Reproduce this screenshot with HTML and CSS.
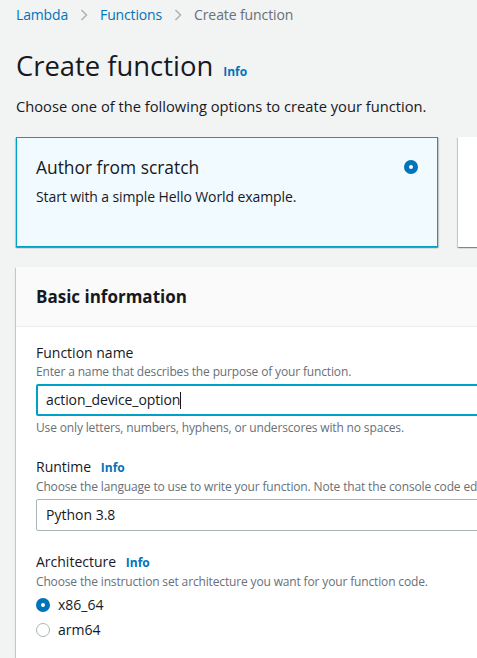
FILE: index.html
```html
<!DOCTYPE html>
<html lang="en">
<head>
<meta charset="utf-8">
<title>Create function</title>
<link rel="stylesheet" href="styles.css">
</head>
<body>
<main class="page">
  <nav class="crumbs">
    <a class="crumb-link">Lambda</a>
    <svg class="chev" width="8" height="12" viewBox="0 0 8 12"><path d="M1.5 1 L6.5 6 L1.5 11" fill="none" stroke="#aab7b8" stroke-width="1.6"/></svg>
    <a class="crumb-link">Functions</a>
    <svg class="chev" width="8" height="12" viewBox="0 0 8 12"><path d="M1.5 1 L6.5 6 L1.5 11" fill="none" stroke="#aab7b8" stroke-width="1.6"/></svg>
    <span class="crumb-current">Create function</span>
  </nav>

  <header class="head">
    <h1 class="title">Create function</h1>
    <span class="info">Info</span>
  </header>
  <p class="lead">Choose one of the following options to create your function.</p>

  <div class="tiles">
    <div class="tile selected">
      <div class="tile-top">
        <div class="tile-title">Author from scratch</div>
        <span class="radio on"></span>
      </div>
      <div class="tile-desc">Start with a simple Hello World example.</div>
    </div>
    <div class="tile"></div>
  </div>

  <section class="panel">
    <div class="panel-head">Basic information</div>
    <div class="panel-body">
      <div class="field">
        <div class="label">Function name</div>
        <div class="desc">Enter a name that describes the purpose of your function.</div>
        <div class="input focused">action_device_option<span class="caret"></span></div>
        <div class="desc constraint">Use only letters, numbers, hyphens, or underscores with no spaces.</div>
      </div>
      <div class="field">
        <div class="label">Runtime <span class="info small">Info</span></div>
        <div class="desc">Choose the language to use to write your function. Note that the console code editor supports only Node.js, Python, and Ruby.</div>
        <div class="input">Python 3.8</div>
      </div>
      <div class="field">
        <div class="label">Architecture <span class="info small">Info</span></div>
        <div class="desc">Choose the instruction set architecture you want for your function code.</div>
        <div class="options">
          <div class="option"><span class="radio on"></span>x86_64</div>
          <div class="option"><span class="radio"></span>arm64</div>
        </div>
      </div>
    </div>
  </section>
</main>
</body>
</html>
```
FILE: styles.css
```css
html, body {
  margin: 0;
  padding: 0;
  overflow: hidden;
}
body {
  background: #f2f3f3;
  color: #16191f;
  font-family: "Open Sans", "Noto Sans", sans-serif;
  font-size: 14px;
  line-height: 20px;
}
.page {
  width: 864px;
  padding-left: 16px;
}
.crumbs {
  display: flex;
  align-items: center;
  height: 30px;
  gap: 12px;
}
.crumb-link {
  color: #0073bb;
  letter-spacing: -0.15px;
}
.crumb-current {
  color: #687078;
  letter-spacing: -0.1px;
}
.chev {
  display: block;
}
.head {
  display: flex;
  align-items: baseline;
  gap: 10px;
  margin-top: 18px;
}
.title {
  margin: 0;
  font-size: 27.4px;
  line-height: 36px;
  font-weight: 400;
}
.info {
  color: #0073bb;
  font-weight: 700;
  font-size: 12px;
}
.info.small {
  margin-left: 6px;
}
.lead {
  margin: 12px 0 0;
  font-size: 14.7px;
}
.tiles {
  display: grid;
  grid-template-columns: 422px 422px;
  gap: 20px;
  margin-top: 21px;
}
.tile {
  box-sizing: border-box;
  height: 110px;
  background: #fff;
  border: 1px solid #fff;
  box-shadow: 0 1px 1px 0 rgba(0,28,36,.3), 1px 1px 1px 0 rgba(0,28,36,.15), -1px 1px 1px 0 rgba(0,28,36,.15);
  padding: 17px 19px;
}
.tile.selected {
  background: #f1faff;
  border-color: #00a1c9;
}
.tile-top {
  display: flex;
  justify-content: space-between;
  align-items: center;
}
.tile-title {
  font-size: 17.4px;
  line-height: 24px;
}
.tile-desc {
  margin-top: 8px;
  letter-spacing: -0.1px;
}
.radio {
  box-sizing: border-box;
  display: inline-block;
  width: 14px;
  height: 14px;
  border-radius: 50%;
  border: 1px solid #aab7b8;
  background: #fff;
  flex: none;
}
.radio.on {
  border: 5px solid #0073bb;
}
.panel {
  margin-top: 20px;
  background: #fff;
  box-shadow: 0 1px 1px 0 rgba(0,28,36,.3), 1px 1px 1px 0 rgba(0,28,36,.15), -1px 1px 1px 0 rgba(0,28,36,.15);
}
.panel-head {
  background: #fafafa;
  border-bottom: 1px solid #eaeded;
  padding: 18px 20px 17px;
  font-size: 17px;
  line-height: 24px;
  font-weight: 700;
}
.panel-body {
  padding: 15px 20px 20px;
  display: flex;
  flex-direction: column;
  gap: 20px;
}
.label {
  color: #16191f;
  line-height: 22px;
}
.desc {
  font-size: 12px;
  line-height: 16px;
  color: #687078;
  white-space: nowrap;
  letter-spacing: -0.15px;
}
.constraint {
  margin-top: 4px;
}
.input {
  box-sizing: border-box;
  margin-top: 4px;
  height: 32px;
  border: 1px solid #aab7b8;
  border-radius: 2px;
  padding: 0 9px;
  display: flex;
  align-items: center;
  background: #fff;
}
.input.focused {
  border: 2px solid #00a1c9;
  padding: 0 8px;
  letter-spacing: -0.1px;
}
.caret {
  display: inline-block;
  width: 1px;
  height: 17px;
  background: #16191f;
}
.options {
  margin-top: 5px;
  display: flex;
  flex-direction: column;
  gap: 5px;
}
.option {
  display: flex;
  align-items: center;
  gap: 8px;
}
```
